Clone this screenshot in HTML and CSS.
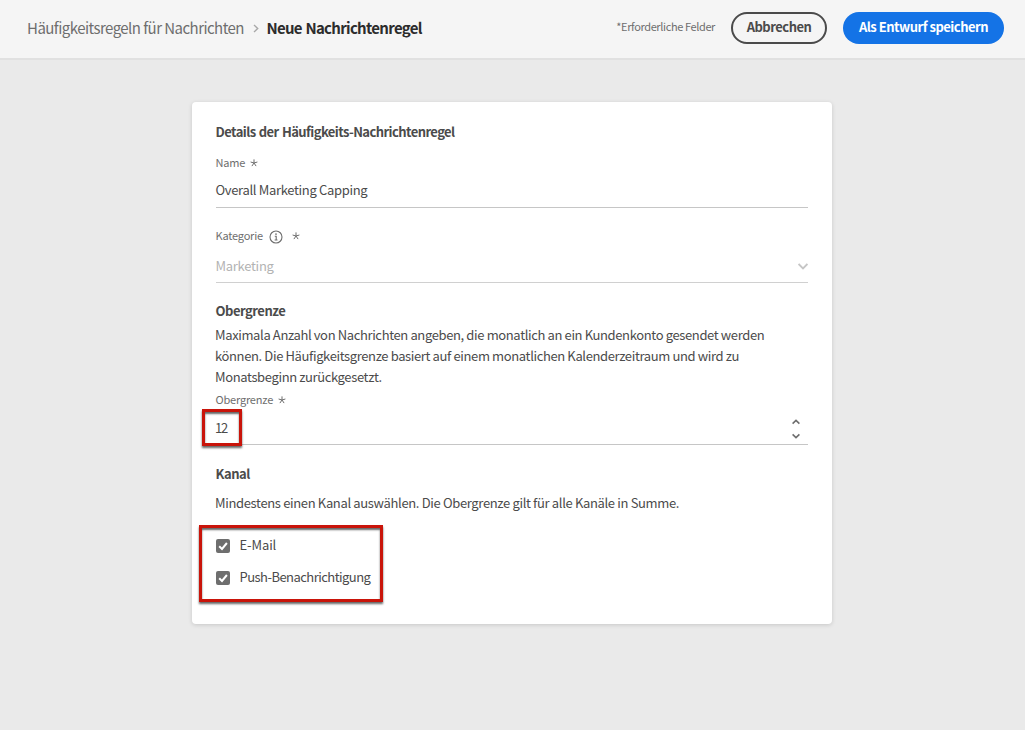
FILE: index.html
```html
<!DOCTYPE html>
<html lang="de">
<head>
<meta charset="utf-8">
<title>Neue Nachrichtenregel</title>
<link rel="stylesheet" href="styles.css">
</head>
<body>
<header class="topbar">
  <nav class="crumbs">
    <span class="crumb-link">Häufigkeitsregeln für Nachrichten</span>
    <svg class="crumb-sep" width="6" height="9" viewBox="0 0 6 9"><path d="M1 1 4.7 4.5 1 8"/></svg>
    <span class="crumb-current">Neue Nachrichtenregel</span>
  </nav>
  <span class="required-note">*Erforderliche Felder</span>
  <button class="btn btn-outline">Abbrechen</button>
  <button class="btn btn-primary">Als Entwurf speichern</button>
</header>
<main class="page">
  <form class="card">
    <h2 class="title title-main">Details der Häufigkeits-Nachrichtenregel</h2>
    <div class="label label-name"><span>Name</span><svg class="star" width="8" height="8" viewBox="0 0 8 8"><path d="M4 4V.4M4 4 .6 3M4 4l3.4-1M4 4 1.9 7.1M4 4l2.1 3.1"/></svg></div>
    <div class="field field-name"><span>Overall Marketing Capping</span></div>
    <div class="label label-category"><span>Kategorie</span>
      <svg class="info" width="14" height="14" viewBox="0 0 14 14"><circle cx="7" cy="7" r="6"/><path d="M5.8 6.3H7.2V10M5.6 10h2.9"/><circle class="dot" cx="7" cy="4.1" r=".85"/></svg>
      <svg class="star" width="8" height="8" viewBox="0 0 8 8"><path d="M4 4V.4M4 4 .6 3M4 4l3.4-1M4 4 1.9 7.1M4 4l2.1 3.1"/></svg></div>
    <div class="field field-category"><span>Marketing</span>
      <svg class="chevron" width="10" height="7" viewBox="0 0 10 7"><path d="M.6 1 5 5.4 9.4 1"/></svg></div>
    <h2 class="title title-limit">Obergrenze</h2>
    <p class="text text-limit">Maximala Anzahl von Nachrichten angeben, die monatlich an ein Kundenkonto gesendet werden<br>können. Die Häufigkeitsgrenze basiert auf einem monatlichen Kalenderzeitraum und wird zu<br>Monatsbeginn zurückgesetzt.</p>
    <div class="label label-limit"><span>Obergrenze</span><svg class="star" width="8" height="8" viewBox="0 0 8 8"><path d="M4 4V.4M4 4 .6 3M4 4l3.4-1M4 4 1.9 7.1M4 4l2.1 3.1"/></svg></div>
    <div class="field field-limit"><span class="number">12</span>
      <span class="stepper"><svg width="8" height="6" viewBox="0 0 8 6"><path d="M.6 4.6 4 1.4l3.4 3.2"/></svg><svg width="8" height="6" viewBox="0 0 8 6"><path d="M.6 1.4 4 4.6l3.4-3.2"/></svg></span>
      <i class="mark mark-limit"></i></div>
    <h2 class="title title-channel">Kanal</h2>
    <p class="text text-channel">Mindestens einen Kanal auswählen. Die Obergrenze gilt für alle Kanäle in Summe.</p>
    <div class="channels">
      <div class="check"><svg width="14" height="14" viewBox="0 0 14 14"><rect width="14" height="14" rx="2"/><path d="M3.2 7.2 6 10l4.9-6"/></svg><span class="email">E-Mail</span></div>
      <div class="check"><svg width="14" height="14" viewBox="0 0 14 14"><rect width="14" height="14" rx="2"/><path d="M3.2 7.2 6 10l4.9-6"/></svg><span class="push">Push-Benachrichtigung</span></div>
      <i class="mark mark-channels"></i>
    </div>
  </form>
</main>
</body>
</html>
```
FILE: styles.css
```css
* { box-sizing: border-box; }
body {
  margin: 0;
  height: 730px;
  overflow: hidden;
  background: #eaeaea;
  color: #4b4b4b;
  font: 13px/20px "Noto Sans CJK SC", "Noto Sans", sans-serif;
}
svg { display: block; flex: none; fill: none; stroke: currentColor; }
.topbar {
  display: flex;
  align-items: center;
  height: 60px;
  padding: 0 21px 2px 27px;
  background: #f5f5f5;
  border-bottom: 2px solid #e1e1e1;
}
.crumbs { display: flex; align-items: center; flex: 1; font-size: 15px; white-space: nowrap; }
.crumb-link { color: #6e6e6e; letter-spacing: -.54px; }
.crumb-sep { margin: 1px 7.5px 0 9px; color: #a8a8a8; stroke-width: 1.4; }
.crumb-current { color: #2c2c2c; font-weight: 700; letter-spacing: -.7px; word-spacing: .8px; }
.required-note { margin: -4px 16px 0 0; font-size: 11px; color: #6e6e6e; letter-spacing: -.38px; }
.btn {
  height: 32px;
  padding: 0 0 2px;
  border-radius: 16px;
  font: 700 13px/26px "Noto Sans CJK SC", "Noto Sans", sans-serif;
  letter-spacing: -.5px;
  white-space: nowrap;
}
.btn-outline { width: 96px; margin-right: 16px; border: 2px solid #4b4b4b; background: transparent; color: #4b4b4b; }
.btn-primary { width: 161px; border: 0; background: #1473e6; color: #fff; }
.page { display: flex; justify-content: center; padding: 42px 1px 0 0; }
.card {
  width: 640px;
  height: 522px;
  padding: 20px 24px 0;
  border-radius: 4px;
  background: #fff;
  box-shadow: 0 1px 4px rgba(0, 0, 0, .15);
}
.title { margin: 0 0 0 -.5px; font-size: 13px; line-height: 20px; font-weight: 700; letter-spacing: -.48px; }
.title-main { letter-spacing: -.57px; word-spacing: .9px; }
.label { display: flex; align-items: center; height: 16px; font-size: 11px; line-height: 16px; color: #6e6e6e; letter-spacing: -.2px; }
.label span { margin: -2px 0 0 -.5px; }
.label-name { margin-top: 13px; }
.star { margin-left: 5px; stroke-width: 1; }
.field { display: flex; position: relative; justify-content: space-between; border-bottom: 1px solid #c6c6c6; letter-spacing: -.33px; }
.field > span:first-child { margin-left: -.5px; }
.field-name { height: 37px; padding-top: 9px; }
.label-category { margin-top: 20px; }
.info { margin: 1px 0 0 6.5px; stroke-width: 1.1; }
.info + .star { margin-left: 9px; }
.info .dot { fill: currentColor; stroke: none; }
.field-category { height: 39px; padding-top: 12px; color: #b3b3b3; border-color: #d0d0d0; letter-spacing: -.28px; }
.chevron { margin-top: 7px; stroke-width: 1.8; color: #c6c6c6; }
.title-limit { margin-top: 18px; }
.text { margin: 0 0 0 -1px; line-height: 21px; letter-spacing: -.37px; white-space: nowrap; }
.text-limit { margin-top: 3px; }
.label-limit { margin-top: 5px; }
.field-limit { height: 37px; padding-top: 11px; }
.field > span.number { margin: -1px 0 0 -1px; letter-spacing: -1.3px; }
.stepper { display: flex; flex-direction: column; gap: 8px; margin-right: 8px; stroke-width: 1.6; color: #6e6e6e; }
.title-channel { margin-top: 19px; }
.text-channel { margin-top: 8px; letter-spacing: -.345px; }
.channels { position: relative; display: flex; flex-direction: column; gap: 12px; margin-top: 22px; }
.check { display: flex; align-items: center; gap: 9.5px; height: 20px; }
.check svg { margin-top: 1px; }
.check rect { fill: #6e6e6e; stroke: none; }
.check path { stroke: #fff; stroke-width: 2; }
.email { letter-spacing: -.1px; }
.push { letter-spacing: -.54px; }
.mark { position: absolute; border: 3px solid #c9140a; box-shadow: 0 2px 2px rgba(0, 0, 0, .6), inset 0 2px 2px rgba(0, 0, 0, .6); }
.mark-limit { left: -14px; top: 1px; width: 40px; height: 37px; }
.mark-channels { left: -17px; top: -10px; width: 184px; height: 77px; }
```
